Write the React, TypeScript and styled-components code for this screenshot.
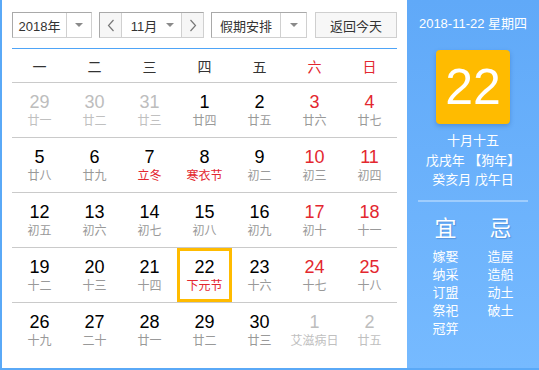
import styled, {createGlobalStyle, css} from "styled-components";

const GlobalStyle = createGlobalStyle`
    * {
        box-sizing: border-box;
    }
    body {
        margin: 0;
        background: #fff;
        font-family: "Liberation Sans", "Noto Sans CJK SC", sans-serif;
    }
`

const RED = '#e3272f'

const Frame = styled.div`
    width: 539px;
    height: 370px;
    display: flex;
    border-left: 2px solid #5aa9f7;
    border-bottom: 2px solid #5aa9f7;
    background: #fff;
`

const Main = styled.div`
    width: 405px;
    padding: 12px 10px 0 10px;
    display: flex;
    flex-direction: column;
`

const Toolbar = styled.div`
    display: flex;
    height: 26px;
    margin-bottom: 10px;
`

const Select = styled.div<{ width: number; gap?: number }>`
    display: flex;
    width: ${({width}) => width}px;
    margin-right: ${({gap}) => gap ?? 7}px;
    border: 1px solid #a9a9a9;
    border-right-color: #d0d0d0;
    border-bottom-color: #d0d0d0;
    font-size: 13px;
    color: #333;
`

const SelectText = styled.div`
    flex: 1;
    display: flex;
    align-items: center;
    justify-content: center;
`

const caret = css`
    content: '';
    border-left: 4px solid transparent;
    border-right: 4px solid transparent;
    border-top: 4px solid #8a8a8a;
`

const SelectArrow = styled.div<{ width: number }>`
    width: ${({width}) => width}px;
    border-left: 1px solid #d0d0d0;
    display: flex;
    align-items: center;
    justify-content: center;

    &::after {
        ${caret}
    }
`

const MonthField = styled.div`
    flex: 1;
    display: flex;
    align-items: center;
    justify-content: center;
    gap: 9px;
    padding-left: 2px;

    &::after {
        ${caret}
    }
`

const Stepper = styled.button<{ side: 'left' | 'right' }>`
    width: 22px;
    padding: 0;
    background: #f6f6f6;
    border: none;
    ${({side}) => side === 'left' ? 'border-right: 1px solid #d0d0d0;' : 'border-left: 1px solid #d0d0d0;'}
    display: flex;
    align-items: center;
    justify-content: center;
`

const ActionButton = styled.button`
    width: 82px;
    height: 26px;
    padding: 0;
    background: #f7f7f7;
    border: 1px solid #cfcfcf;
    font-family: inherit;
    font-size: 13px;
    color: #333;
`

const WeekHeader = styled.div`
    display: grid;
    grid-template-columns: repeat(7, 55px);
    height: 35px;
    border-top: 1px solid #4ea4f7;
    border-bottom: 1px solid #cacaca;
`

const WeekDay = styled.div<{ weekend?: boolean }>`
    display: flex;
    align-items: center;
    justify-content: center;
    font-size: 14px;
    color: ${({weekend}) => weekend ? RED : '#333'};
`

const Row = styled.div<{ last?: boolean }>`
    display: grid;
    grid-template-columns: repeat(7, 55px);
    height: 55px;
    border-bottom: 1px solid ${({last}) => last ? 'transparent' : '#cacaca'};
`

const Cell = styled.div<{ today?: boolean }>`
    display: flex;
    flex-direction: column;
    align-items: center;
    padding-top: 9px;
    ${({today}) => today && css`
        box-shadow: inset 0 0 0 3px #ffbb00;
    `}
`

const DayNumber = styled.div<{ tone: 'normal' | 'weekend' | 'muted' }>`
    font-size: 18px;
    line-height: 20px;
    color: ${({tone}) => tone === 'weekend' ? RED : tone === 'muted' ? '#bdbdbd' : '#000'};
`

const Lunar = styled.div<{ tone: 'normal' | 'festival' | 'muted' }>`
    font-size: 12px;
    line-height: 18px;
    white-space: nowrap;
    color: ${({tone}) => tone === 'festival' ? RED : tone === 'muted' ? '#c0c0c0' : '#999'};
`

const Side = styled.div`
    width: 132px;
    background: linear-gradient(180deg, #60a9f8 0%, #76baff 100%);
    color: #fff;
    display: flex;
    flex-direction: column;
    align-items: center;
    padding-top: 16px;
`

const SideDate = styled.div`
    font-size: 13px;
    line-height: 16px;
`

const BigDay = styled.div`
    width: 74px;
    height: 74px;
    margin-top: 18px;
    border-radius: 4px;
    background: #ffbb00;
    box-shadow: 0 2px 4px rgba(40, 90, 160, 0.35);
    display: flex;
    align-items: center;
    justify-content: center;
    font-size: 50px;
    line-height: 1;
`

const LunarInfo = styled.div`
    margin-top: 7px;
    font-size: 13px;
    line-height: 19.5px;
    text-align: center;
    white-space: pre;
`

const Divider = styled.div`
    width: 110px;
    height: 2px;
    margin-top: 10px;
    background: rgba(255, 255, 255, 0.35);
`

const Advice = styled.div`
    display: grid;
    grid-template-columns: 50px 50px;
    gap: 5px;
    margin-top: 14px;
`

const AdviceColumn = styled.div`
    display: flex;
    flex-direction: column;
    align-items: center;
`

const AdviceTitle = styled.div`
    font-size: 22px;
    line-height: 26px;
    margin-bottom: 6px;
    text-shadow: 1px 1px 1px rgba(40, 90, 160, 0.35);
`

const AdviceItem = styled.div`
    font-size: 13px;
    line-height: 18px;
`

type Day = {
    n: number;
    lunar: string;
    other?: boolean;
    festival?: boolean;
    today?: boolean;
}

const weeks: Day[][] = [
    [
        {n: 29, lunar: '廿一', other: true}, {n: 30, lunar: '廿二', other: true}, {n: 31, lunar: '廿三', other: true},
        {n: 1, lunar: '廿四'}, {n: 2, lunar: '廿五'}, {n: 3, lunar: '廿六'}, {n: 4, lunar: '廿七'},
    ],
    [
        {n: 5, lunar: '廿八'}, {n: 6, lunar: '廿九'}, {n: 7, lunar: '立冬', festival: true},
        {n: 8, lunar: '寒衣节', festival: true}, {n: 9, lunar: '初二'}, {n: 10, lunar: '初三'}, {n: 11, lunar: '初四'},
    ],
    [
        {n: 12, lunar: '初五'}, {n: 13, lunar: '初六'}, {n: 14, lunar: '初七'},
        {n: 15, lunar: '初八'}, {n: 16, lunar: '初九'}, {n: 17, lunar: '初十'}, {n: 18, lunar: '十一'},
    ],
    [
        {n: 19, lunar: '十二'}, {n: 20, lunar: '十三'}, {n: 21, lunar: '十四'},
        {n: 22, lunar: '下元节', festival: true, today: true}, {n: 23, lunar: '十六'}, {n: 24, lunar: '十七'}, {n: 25, lunar: '十八'},
    ],
    [
        {n: 26, lunar: '十九'}, {n: 27, lunar: '二十'}, {n: 28, lunar: '廿一'},
        {n: 29, lunar: '廿二'}, {n: 30, lunar: '廿三'}, {n: 1, lunar: '艾滋病日', other: true}, {n: 2, lunar: '廿五', other: true},
    ],
]

const weekDays = ['一', '二', '三', '四', '五', '六', '日']

const Chevron = ({dir}: { dir: 'left' | 'right' }) => (
    <svg width="8" height="13" viewBox="0 0 8 13">
        <path
            d={dir === 'left' ? 'M6.5 1 L1.5 6.5 L6.5 12' : 'M1.5 1 L6.5 6.5 L1.5 12'}
            fill="none"
            stroke="#777"
            strokeWidth="1.2"
        />
    </svg>
)

export default function App() {
    return (
        <>
            <GlobalStyle/>
            <Frame>
                <Main>
                    <Toolbar>
                        <Select width={80}>
                            <SelectText>2018年</SelectText>
                            <SelectArrow width={25}/>
                        </Select>
                        <Select width={105}>
                            <Stepper side="left"><Chevron dir="left"/></Stepper>
                            <MonthField>11月</MonthField>
                            <Stepper side="right"><Chevron dir="right"/></Stepper>
                        </Select>
                        <Select width={96} gap={8}>
                            <SelectText>假期安排</SelectText>
                            <SelectArrow width={26}/>
                        </Select>
                        <ActionButton>返回今天</ActionButton>
                    </Toolbar>
                    <WeekHeader>
                        {weekDays.map((d, i) => (
                            <WeekDay key={d} weekend={i >= 5}>{d}</WeekDay>
                        ))}
                    </WeekHeader>
                    {weeks.map((week, wi) => (
                        <Row key={wi} last={wi === weeks.length - 1}>
                            {week.map((day, di) => (
                                <Cell key={di} today={day.today}>
                                    <DayNumber tone={day.other ? 'muted' : di >= 5 ? 'weekend' : 'normal'}>
                                        {day.n}
                                    </DayNumber>
                                    <Lunar tone={day.other ? 'muted' : day.festival ? 'festival' : 'normal'}>
                                        {day.lunar}
                                    </Lunar>
                                </Cell>
                            ))}
                        </Row>
                    ))}
                </Main>
                <Side>
                    <SideDate>2018-11-22 星期四</SideDate>
                    <BigDay>22</BigDay>
                    <LunarInfo>
                        <div>十月十五</div>
                        <div>戊戌年 【狗年】</div>
                        <div>癸亥月 戊午日</div>
                    </LunarInfo>
                    <Divider/>
                    <Advice>
                        <AdviceColumn>
                            <AdviceTitle>宜</AdviceTitle>
                            {['嫁娶', '纳采', '订盟', '祭祀', '冠笄'].map((t) => (
                                <AdviceItem key={t}>{t}</AdviceItem>
                            ))}
                        </AdviceColumn>
                        <AdviceColumn>
                            <AdviceTitle>忌</AdviceTitle>
                            {['造屋', '造船', '动土', '破土'].map((t) => (
                                <AdviceItem key={t}>{t}</AdviceItem>
                            ))}
                        </AdviceColumn>
                    </Advice>
                </Side>
            </Frame>
        </>
    )
}
